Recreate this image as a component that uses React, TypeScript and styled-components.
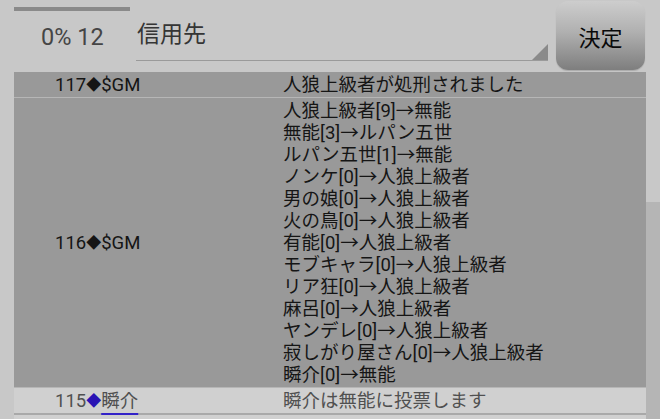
import React from "react";
import styled, { createGlobalStyle } from "styled-components";

const GlobalStyle = createGlobalStyle`
  html, body {
    margin: 0;
    padding: 0;
    background: #c8c8c8;
    overflow: hidden;
  }
  body {
    font-family: Roboto, "Noto Sans CJK JP", sans-serif;
  }
`;

type LogEntry = {
  no: number;
  name: string;
  lines: string[];
  self?: boolean;
};

const logs: LogEntry[] = [
  { no: 117, name: "$GM", lines: ["人狼上級者が処刑されました"] },
  {
    no: 116,
    name: "$GM",
    lines: [
      "人狼上級者[9]→無能",
      "無能[3]→ルパン五世",
      "ルパン五世[1]→無能",
      "ノンケ[0]→人狼上級者",
      "男の娘[0]→人狼上級者",
      "火の鳥[0]→人狼上級者",
      "有能[0]→人狼上級者",
      "モブキャラ[0]→人狼上級者",
      "リア狂[0]→人狼上級者",
      "麻呂[0]→人狼上級者",
      "ヤンデレ[0]→人狼上級者",
      "寂しがり屋さん[0]→人狼上級者",
      "瞬介[0]→無能",
    ],
  },
  { no: 115, name: "瞬介", lines: ["瞬介は無能に投票します"], self: true },
];

export default function App() {
  return (
    <Screen>
      <GlobalStyle />
      <Header>
        <Status>
          <Progress />
          <Count>0% 12</Count>
        </Status>
        <Target>
          <TargetLabel>信用先</TargetLabel>
          <Corner />
        </Target>
        <DecideButton>決定</DecideButton>
      </Header>
      <Body>
        <LogTable>
          {logs.map((log) => (
            <LogRow key={log.no} $light={log.self}>
              <Speaker $light={log.self}>
                {log.no}
                <Diamond $light={log.self}>◆</Diamond>
                {log.self ? <NameLink>{log.name}</NameLink> : log.name}
              </Speaker>
              <Message $light={log.self}>
                {log.lines.map((line, i) => (
                  <div key={i}>{line}</div>
                ))}
              </Message>
            </LogRow>
          ))}
          <LogRow $light />
        </LogTable>
        <ScrollTrack>
          <ScrollThumb />
        </ScrollTrack>
      </Body>
    </Screen>
  );
}

const Screen = styled.div`
  width: 660px;
  height: 419px;
  overflow: hidden;
  display: flex;
  flex-direction: column;
`;

const Header = styled.div`
  height: 72px;
  flex-shrink: 0;
  display: flex;
  flex-direction: row;
  padding-left: 14px;
  box-sizing: border-box;
`;

const Status = styled.div`
  width: 122px;
  display: flex;
  flex-direction: column;
`;

const Progress = styled.div`
  margin-top: 7px;
  width: 116px;
  height: 4px;
  background: #8a8a8a;
`;

const Count = styled.div`
  margin-top: 11px;
  padding-left: 27px;
  font-size: 23.5px;
  line-height: 30px;
  color: #454545;
`;

const Target = styled.div`
  position: relative;
  width: 412px;
  height: 61px;
  border-bottom: 1.5px solid #9a9a9a;
  box-sizing: border-box;
`;

const TargetLabel = styled.div`
  margin-top: 16px;
  padding-left: 1px;
  font-family: "Noto Sans CJK JP", sans-serif;
  font-size: 23px;
  line-height: 32px;
  color: #353535;
`;

const Corner = styled.div`
  position: absolute;
  right: 0;
  bottom: 0;
  width: 0;
  height: 0;
  border-left: 16px solid transparent;
  border-bottom: 16px solid #8a8a8a;
`;

const DecideButton = styled.button`
  margin: 1px 0 0 8px;
  width: 89px;
  height: 69px;
  border: none;
  border-radius: 12px;
  background: linear-gradient(to bottom, #cdcdcd 0%, #b0b0b0 45%, #7e7e7e 100%);
  box-shadow: 0 1px 1px rgba(0, 0, 0, 0.15);
  font-family: "Noto Sans CJK JP", sans-serif;
  font-size: 22px;
  color: #0a0a0a;
  padding: 0;
  cursor: pointer;
`;

const Body = styled.div`
  flex: 1;
  display: flex;
  flex-direction: row;
  min-height: 0;
  overflow: hidden;
`;

const LogTable = styled.div`
  margin-left: 14px;
  width: 632px;
  display: flex;
  flex-direction: column;
`;

const LogRow = styled.div<{ $light?: boolean }>`
  flex-shrink: 0;
  display: grid;
  grid-template-columns: 269px 1fr;
  align-items: center;
  min-height: 22px;
  background: ${(p) => (p.$light ? "#d0d0d0" : "#999999")};
  border-bottom: ${(p) => (p.$light ? "2px solid #a9a9a9" : "1px solid #b6b6b6")};
  padding: 1.5px 0;
  font-size: 18.5px;
  line-height: 22px;
`;

const Speaker = styled.div<{ $light?: boolean }>`
  padding-left: 41px;
  color: ${(p) => (p.$light ? "#505050" : "#151515")};
  white-space: nowrap;
`;

const Diamond = styled.span<{ $light?: boolean }>`
  font-size: 15px;
  vertical-align: 1px;
  color: ${(p) => (p.$light ? "#2a14b4" : "#151515")};
`;

const NameLink = styled.span`
  text-decoration-line: underline;
  text-decoration-style: solid;
  text-decoration-color: #3322c8;
  text-decoration-thickness: 2px;
  text-underline-offset: 6px;
`;

const Message = styled.div<{ $light?: boolean }>`
  color: ${(p) => (p.$light ? "#505050" : "#151515")};
  white-space: nowrap;
`;

const ScrollTrack = styled.div`
  width: 14px;
  display: flex;
  flex-direction: column;
`;

const ScrollThumb = styled.div`
  margin-top: 130px;
  flex: 1;
  background: #b5b5b5;
`;
